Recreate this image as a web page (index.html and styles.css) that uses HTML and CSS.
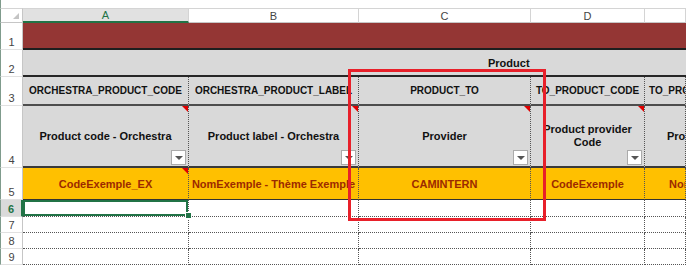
FILE: index.html
```html
<!DOCTYPE html>
<html lang="fr">
<head>
  <meta charset="UTF-8">
  <meta name="viewport" content="width=device-width, initial-scale=1.0">
  <title>Catalogue produits</title>
  <link rel="stylesheet" href="styles.css">
</head>
<body>
  <main class="sheet">
    <div class="topbar"></div>

    <!-- en-têtes de colonnes -->
    <div class="corner"><span class="corner-mark"></span></div>
    <div class="ch selected">A</div>
    <div class="ch">B</div>
    <div class="ch">C</div>
    <div class="ch">D</div>
    <div class="ch"></div>

    <!-- ligne 1 : bandeau -->
    <div class="rh">1</div>
    <div class="band"></div>

    <!-- ligne 2 : groupe -->
    <div class="rh">2</div>
    <div class="group"><span class="group-title">Product</span></div>

    <!-- ligne 3 : codes techniques -->
    <div class="rh">3</div>
    <div class="cell code">ORCHESTRA_PRODUCT_CODE</div>
    <div class="cell code">ORCHESTRA_PRODUCT_LABEL</div>
    <div class="cell code">PRODUCT_TO</div>
    <div class="cell code">TO_PRODUCT_CODE</div>
    <div class="cell code last">TO_PRODUCT_LABEL</div>

    <!-- ligne 4 : libellés -->
    <div class="rh">4</div>
    <div class="cell label note">Product code - Orchestra<span class="filter"></span></div>
    <div class="cell label note">Product label - Orchestra<span class="filter"></span></div>
    <div class="cell label note">Provider<span class="filter"></span></div>
    <div class="cell label note">Product provider Code<span class="filter"></span></div>
    <div class="cell label last">Product provider label</div>

    <!-- ligne 5 : exemples -->
    <div class="rh">5</div>
    <div class="cell value note">CodeExemple_EX</div>
    <div class="cell value">NomExemple - Thème Exemple</div>
    <div class="cell value">CAMINTERN</div>
    <div class="cell value">CodeExemple</div>
    <div class="cell value last">NomExemple</div>

    <!-- lignes vides -->
    <div class="rh selected">6</div>
    <div class="cell empty active"></div>
    <div class="cell empty"></div>
    <div class="cell empty"></div>
    <div class="cell empty"></div>
    <div class="cell empty"></div>

    <div class="rh">7</div>
    <div class="cell empty"></div>
    <div class="cell empty"></div>
    <div class="cell empty"></div>
    <div class="cell empty"></div>
    <div class="cell empty"></div>

    <div class="rh">8</div>
    <div class="cell empty"></div>
    <div class="cell empty"></div>
    <div class="cell empty"></div>
    <div class="cell empty"></div>
    <div class="cell empty"></div>

    <div class="rh">9</div>
    <div class="cell empty"></div>
    <div class="cell empty"></div>
    <div class="cell empty"></div>
    <div class="cell empty"></div>
    <div class="cell empty"></div>

    <!-- encadré rouge autour de la colonne PRODUCT_TO -->
    <div class="highlight"></div>
  </main>
</body>
</html>
```

FILE: styles.css
```css
body {
  margin: 0;
  padding: 0;
  background-color: white;
  font-family: "Liberation Sans", Arial, sans-serif;
}

.sheet {
  position: relative;
  display: grid;
  grid-template-columns: 23px 166px 170px 172px 114px 41px;
  grid-template-rows: 8px 15px 27px 27px 29px 62px 32px 17px 16px 16px 16px;
  width: 686px;
  height: 265px;
  overflow: hidden;
}

.topbar {
  grid-column: 1 / -1;
  background-color: white;
  border-left: 1px solid #7f9b8c;
}

/* en-têtes */
.corner {
  position: relative;
  box-sizing: border-box;
  border-left: 1px solid #7f9b8c;
  border-top: 1px solid #d4d4d4;
  border-right: 1px solid #c6c6c6;
  border-bottom: 1px solid #c6c6c6;
}

.corner-mark {
  position: absolute;
  right: 3px;
  bottom: 3px;
  width: 0;
  height: 0;
  border-left: 6px solid transparent;
  border-bottom: 6px solid #c4c4c4;
}

.ch {
  box-sizing: border-box;
  display: flex;
  align-items: center;
  justify-content: center;
  font-size: 11px;
  color: #444;
  border-top: 1px solid #d4d4d4;
  border-right: 1px solid #d4d4d4;
  border-bottom: 1px solid #c6c6c6;
}

.ch.selected {
  background-color: #e1e1e1;
  color: #217346;
  border-bottom: 2px solid #217346;
}

.rh {
  box-sizing: border-box;
  display: flex;
  align-items: flex-end;
  justify-content: center;
  padding-bottom: 1px;
  font-size: 11px;
  color: #444;
  border-left: 1px solid #7f9b8c;
  border-right: 1px solid #c6c6c6;
  border-bottom: 1px solid #e1e1e1;
}

.rh.selected {
  background-color: #dadada;
  color: #217346;
  font-weight: bold;
  border-right: 2px solid #217346;
}

/* bandeaux */
.band {
  grid-column: 2 / -1;
  background-color: #943634;
  border-bottom: 2px solid #1e1e1e;
}

.group {
  grid-column: 2 / -1;
  box-sizing: border-box;
  display: flex;
  align-items: center;
  padding-left: 465px;
  background-color: #d9d9d9;
  border-bottom: 2px solid #262626;
  font-size: 11px;
  font-weight: bold;
  color: #111;
}

/* cellules */
.cell {
  position: relative;
  box-sizing: border-box;
  display: flex;
  align-items: center;
  justify-content: center;
  text-align: center;
  overflow: hidden;
  border-right: 1px dotted #555;
  color: #111;
  font-weight: bold;
}

.cell.last {
  justify-content: flex-start;
  text-align: left;
}

.code {
  background-color: #d9d9d9;
  border-bottom: 2px solid #4d4d4d;
  font-size: 10px;
  white-space: nowrap;
}

.code.last {
  padding-left: 4px;
}

.label {
  background-color: #d9d9d9;
  border-bottom: 2px solid #3a3a3a;
  font-size: 11px;
  line-height: 13px;
  padding: 0 4px;
}

.label.last {
  padding-left: 22px;
  white-space: nowrap;
}

.value {
  background-color: #ffc000;
  border-bottom: 1px solid #333;
  color: #9c2a00;
  font-size: 11px;
  white-space: nowrap;
}

.value.last {
  padding-left: 24px;
}

.empty {
  border-bottom: 1px dotted #555;
}

/* indicateur de commentaire */
.note::after {
  content: "";
  position: absolute;
  top: 0;
  right: 0;
  width: 0;
  height: 0;
  border-top: 6px solid #e00000;
  border-left: 6px solid transparent;
}

/* bouton de filtre */
.filter {
  position: absolute;
  right: 2px;
  bottom: 1px;
  box-sizing: border-box;
  width: 15px;
  height: 15px;
  background-color: white;
  border: 1px solid #ababab;
}

.filter::after {
  content: "";
  position: absolute;
  left: 3px;
  top: 5px;
  width: 0;
  height: 0;
  border-left: 4px solid transparent;
  border-right: 4px solid transparent;
  border-top: 4px solid #555;
}

/* cellule active A6 */
.active {
  overflow: visible;
  box-shadow: inset 0 0 0 2px #217346;
}

.active::after {
  content: "";
  position: absolute;
  right: -4px;
  bottom: -3px;
  width: 5px;
  height: 5px;
  background-color: #217346;
  border: 1px solid white;
  z-index: 2;
}

.highlight {
  position: absolute;
  left: 348px;
  top: 69px;
  width: 198px;
  height: 152px;
  box-sizing: border-box;
  border: 3px solid #e8202a;
  z-index: 3;
}
```
